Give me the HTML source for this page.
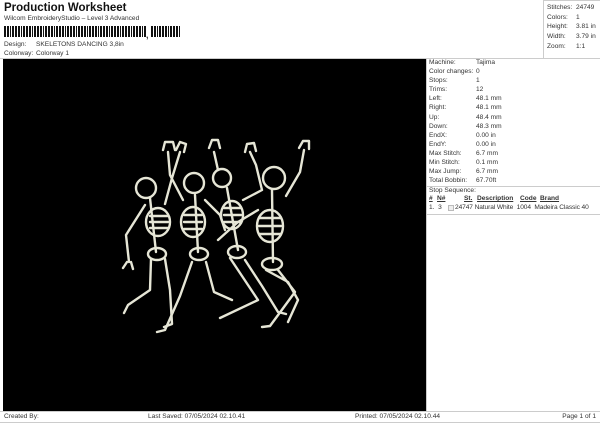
<!DOCTYPE html>
<html><head><meta charset="utf-8"><style>
*{margin:0;padding:0;box-sizing:border-box}
body{width:600px;height:424px;background:#fff;font-family:"Liberation Sans",Arial,sans-serif;color:#333;position:relative;overflow:hidden;font-size:6.6px}
.a{position:absolute;white-space:nowrap}
.bar{position:absolute;top:26px;height:11px;background:repeating-linear-gradient(90deg,#111 0 2px,#fff 2px 3px,#111 3px 5px,#fff 5px 6px,#111 6px 7px,#fff 7px 8px,#111 8px 10px,#fff 10px 11px)}
</style></head><body>
<div class="a" style="left:4px;top:2px;font-size:11.5px;font-weight:bold;color:#111">Production Worksheet</div>
<div class="a" style="left:4px;top:15px">Wilcom EmbroideryStudio – Level 3 Advanced</div>
<div class="bar" style="left:4px;width:142px"></div>
<div class="a" style="left:146px;top:30px;font-size:9px;font-weight:bold">,</div>
<div class="bar" style="left:151px;width:30px"></div>
<div class="a" style="left:4px;top:41px">Design:</div><div class="a" style="left:36px;top:41px">SKELETONS DANCING 3,8in</div>
<div class="a" style="left:4px;top:50px">Colorway:</div><div class="a" style="left:36px;top:50px">Colorway 1</div>
<div style="position:absolute;left:0;top:58px;width:600px;border-top:1px solid #ccc"></div>
<div style="position:absolute;left:543px;top:0;width:57px;height:59px;border-left:1px solid #ccc;border-top:1px solid #ccc"></div>
<div class="a" style="left:547px;top:3px;line-height:9.7px">Stitches:<br>Colors:<br>Height:<br>Width:<br>Zoom:</div>
<div class="a" style="left:576px;top:3px;line-height:9.7px">24749<br>1<br>3.81 in<br>3.79 in<br>1:1</div>
<div style="position:absolute;left:3px;top:59px;width:423px;height:353px;background:#000"></div>
<div style="position:absolute;left:426px;top:59px;width:1px;height:353px;background:#ccc"></div>
<div class="a" style="left:429px;top:58px;line-height:9.1px">Machine:<br>Color changes:<br>Stops:<br>Trims:<br>Left:<br>Right:<br>Up:<br>Down:<br>EndX:<br>EndY:<br>Max Stitch:<br>Min Stitch:<br>Max Jump:<br>Total Bobbin:</div>
<div class="a" style="left:476px;top:58px;line-height:9.1px">Tajima<br>0<br>1<br>12<br>48.1 mm<br>48.1 mm<br>48.4 mm<br>48.3 mm<br>0.00 in<br>0.00 in<br>6.7 mm<br>0.1 mm<br>6.7 mm<br>67.70ft</div>
<div style="position:absolute;left:427px;top:186px;width:173px;border-top:1px solid #ccc"></div>
<div class="a" style="left:429px;top:187px">Stop Sequence:</div>
<div class="a" style="left:429px;top:195px;font-weight:bold;text-decoration:underline">#</div>
<div class="a" style="left:437px;top:195px;font-weight:bold;text-decoration:underline">N#</div>
<div class="a" style="left:464px;top:195px;font-weight:bold;text-decoration:underline">St.</div>
<div class="a" style="left:477px;top:195px;font-weight:bold;text-decoration:underline">Description</div>
<div class="a" style="left:520px;top:195px;font-weight:bold;text-decoration:underline">Code</div>
<div class="a" style="left:540px;top:195px;font-weight:bold;text-decoration:underline">Brand</div>
<div class="a" style="left:429px;top:204px">1.&nbsp; 3</div>
<div style="position:absolute;left:448px;top:205px;width:6px;height:6px;border:1px solid #bbb;background:#eee"></div>
<div class="a" style="left:455px;top:204px;letter-spacing:-0.1px">24747 Natural White&nbsp; 1004&nbsp; Madeira Classic 40</div>
<div style="position:absolute;left:427px;top:214px;width:173px;border-top:1px solid #ccc"></div>
<div style="position:absolute;left:0;top:411px;width:600px;height:12px;border-top:1px solid #ccc;border-bottom:1px solid #ccc"></div>
<div class="a" style="left:4px;top:413px">Created By:</div>
<div class="a" style="left:148px;top:413px">Last Saved: 07/05/2024 02.10.41</div>
<div class="a" style="left:355px;top:413px">Printed: 07/05/2024 02.10.44</div>
<div class="a" style="right:4px;top:413px">Page 1 of 1</div>
<svg style="position:absolute;left:0;top:0" width="600" height="424" fill="none" stroke="#e6e6d6" stroke-width="2.4" stroke-linecap="round" stroke-linejoin="round">
<circle cx="146" cy="188" r="10"/><path d="M150 198 L156 252"/><ellipse cx="158" cy="222" rx="12" ry="14"/><path d="M150 216h18M150 222h18M150 228h18"/><ellipse cx="157" cy="254" rx="9" ry="6"/>
<path d="M145 205 L126 235 L129 262 M127 262 l-4 6 M131 262 l2 7"/>
<path d="M165 204 L172 178 L180 152 M176 150 l4 -8 l6 2 l-2 8"/>
<path d="M151 259 L150 290 L128 305 l-4 8 M165 259 L170 290 L172 324 l-8 3"/>
<circle cx="194" cy="183" r="10"/><path d="M195 195 L198 252"/><ellipse cx="193" cy="222" rx="12" ry="15"/><path d="M184 215h18M184 222h18M184 229h18"/><ellipse cx="199" cy="254" rx="9" ry="6"/>
<path d="M183 200 L170 175 L168 152 M163 150 l2 -8 l8 0 l2 8"/>
<path d="M205 200 L220 215 L225 230"/>
<path d="M192 262 L180 296 L165 330 l-8 2 M206 262 L214 292 L232 300"/>
<circle cx="222" cy="178" r="9"/><path d="M227 188 L238 250"/><ellipse cx="232" cy="215" rx="11" ry="14"/><path d="M224 208h17M224 215h17M224 222h17"/><ellipse cx="237" cy="252" rx="9" ry="6"/>
<path d="M218 170 L214 152 M209 148 l3 -8 l6 0 l2 8"/>
<path d="M243 200 L262 190 L256 165 L250 152 M245 152 l2 -8 l7 -1 l2 8"/>
<path d="M230 258 L258 300 L220 318 M245 260 L262 286 L278 312 l8 2"/>
<circle cx="274" cy="178" r="11"/><path d="M272 190 L273 262"/><ellipse cx="270" cy="226" rx="13" ry="16"/><path d="M259 218h22M259 226h22M259 234h22"/><ellipse cx="272" cy="264" rx="10" ry="6"/>
<path d="M286 196 L300 172 L304 150 M299 148 l4 -7 l6 0 l0 8"/>
<path d="M258 210 L238 222 L218 240"/>
<path d="M266 270 L288 282 L298 300 L288 322 M278 270 L295 292 L270 326 l-8 1"/>
</svg>
</body></html>
